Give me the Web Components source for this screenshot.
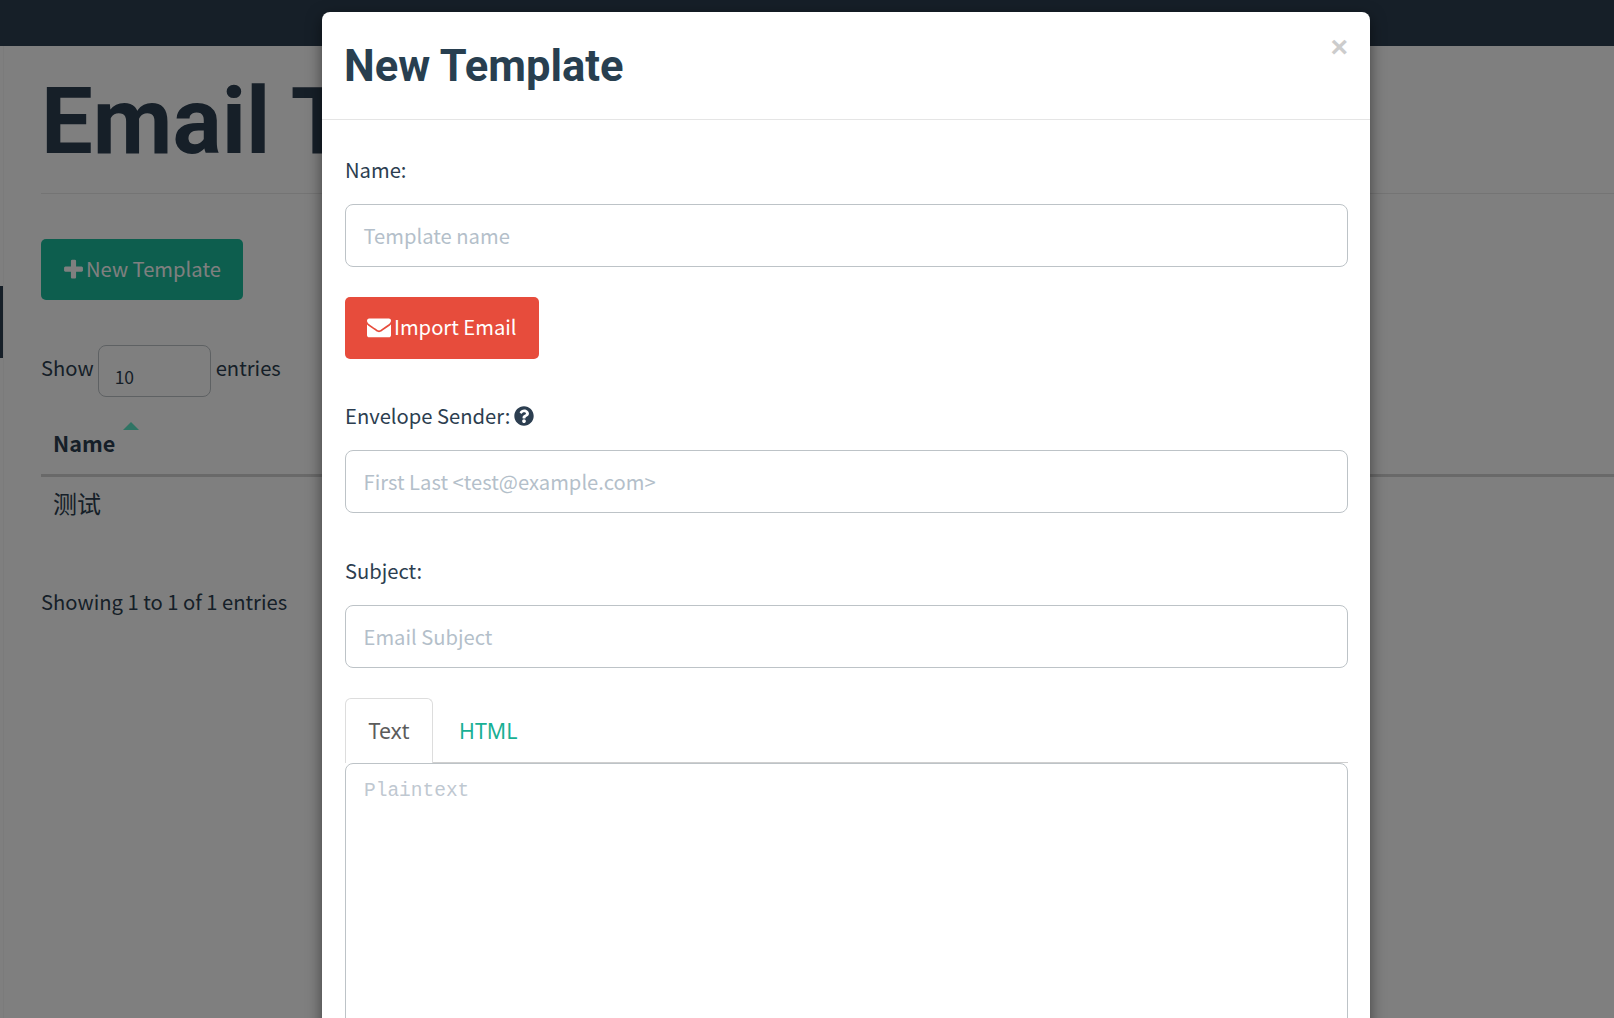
<!DOCTYPE html>
<html>
<head>
<meta charset="utf-8">
<title>Email Templates</title>
<style>
  html, body { margin: 0; height: 100%; overflow: hidden; }
  body {
    background: #fff;
    color: #2c3e50;
    font: 20.2px/1.5 "Noto Sans CJK SC", "Noto Sans", sans-serif;
  }
</style>
</head>
<body>
<app-page>
  <app-modal>
    <span slot="title">New Template</span>
    <form-field label="Name:" placeholder="Template name"></form-field>
    <action-button color="#e74c3c" icon="envelope" height="62" style="--icon-shift:-1px">Import Email</action-button>
    <form-field label="Envelope Sender:" placeholder="First Last &lt;test@example.com&gt;" help spaced></form-field>
    <form-field label="Subject:" placeholder="Email Subject" spaced></form-field>
    <tab-editor></tab-editor>
  </app-modal>
</app-page>

<script>
const ICONS = {
  plus: `<svg viewBox="0 0 1408 1792" width="19" height="24" fill="currentColor"><path d="M1408 736v192q0 40-28 68t-68 28h-416v416q0 40-28 68t-68 28h-192q-40 0-68-28t-28-68v-416h-416q-40 0-68-28t-28-68v-192q0-40 28-68t68-28h416v-416q0-40 28-68t68-28h192q40 0 68 28t28 68v416h416q40 0 68 28t28 68z"/></svg>`,
  envelope: `<svg viewBox="0 0 1792 1792" width="24" height="24" fill="currentColor"><path d="M1792 710v794q0 66-47 113t-113 47h-1472q-66 0-113-47t-47-113v-794q44 49 101 87 362 246 497 345 57 42 92.500 65.500t94.500 48 110 24.500h2q51 0 110-24.500t94.500-48 92.500-65.500q170-123 498-345 57-39 100-87zm0-294q0 79-49 151t-122 123q-376 261-468 325-10 7-42.500 30.500t-54 38-52 32.500-57.500 27-50 9h-2q-23 0-50-9t-57.500-27-52-32.500-54-38-42.500-30.500q-91-64-262-182.500t-205-142.500q-62-42-117-115.500t-55-136.500q0-78 41.500-130t118.500-52h1472q65 0 112.500 47t47.500 113z"/></svg>`,
  help: `<svg viewBox="0 0 512 512" width="20" height="20" fill="currentColor"><path d="M504 256c0 137-111 248-248 248S8 393 8 256 119 8 256 8s248 111 248 248zM263 90c-54 0-89 23-116 64-4 5-3 12 3 16l35 26c5 4 13 3 17-2 18-23 30-36 58-36 21 0 46 13 46 33 0 15-12 23-33 34-24 14-55 31-55 73v7c0 7 5 12 12 12h56c7 0 12-5 12-12v-1c0-29 85-31 85-109 0-59-61-105-120-105zm-7 252c-26 0-47 21-47 47s21 47 47 47 47-21 47-47-21-47-47-47z"/></svg>`
};

class AppPage extends HTMLElement {
  constructor() {
    super();
    this.attachShadow({ mode: "open" });
    this.shadowRoot.innerHTML = `
    <style>
      :host { display: block; height: 1018px; position: relative; overflow: hidden; }
      .nav { height: 46px; background: #2c3e50; }
      .main { display: flex; height: 972px; }
      .side { width: 3px; flex: none; border-right: 1px solid #f6f6f6; padding-top: 240px; }
      .side div { height: 72px; background: #2c3e50; }
      .content { flex: 1; padding-left: 37px; min-width: 0; }
      h1 { margin: 0; padding: 21px 0 0 0; height: 126px; border-bottom: 1px solid #e8e8e8; font: 700 92px/110px Roboto, sans-serif; white-space: nowrap; }
      .new { margin-top: 45px; }
      .length { display: flex; align-items: flex-start; gap: 4px; margin-top: 45px; height: 52px; line-height: 46px; }
      .select { width: 113px; height: 52px; margin-right: 1px; border: 1px solid #bdc3c7; border-radius: 8px; font-size: 17.5px; line-height: 20px; padding: 21px 0 0 16px; box-sizing: border-box; }
      .name { position: relative; height: 77px; border-bottom: 3px solid #d3d3d3; padding-left: 12px; font-weight: 700; font-size: 21.6px; line-height: 92px; }
      .sort { position: absolute; left: 82px; top: 25px; width: 0; height: 0; border: 8px solid transparent; border-top: 0; border-bottom: 8px solid #5ee8c8; }
      .cell { padding-left: 12px; height: 60px; font-size: 24px; line-height: 52px; }
      .info { margin-top: 50px; }
      .overlay { position: absolute; inset: 0; background: rgba(0,0,0,.5); }
    </style>
    <div class="nav"></div>
    <div class="main">
      <div class="side"><div></div></div>
      <div class="content">
        <h1>Email Templates</h1>
        <div class="new"><action-button color="#1abc9c" icon="plus" height="61" style="padding-left:23px;--label-shift:0px">New Template</action-button></div>
        <div class="length"><span>Show</span><div class="select">10</div><span>entries</span></div>
        <div class="name">Name<span class="sort"></span></div>
        <div class="cell">测试</div>
        <div class="info">Showing 1 to 1 of 1 entries</div>
      </div>
    </div>
    <div class="overlay"></div>
    <slot></slot>`;
  }
}

class AppModal extends HTMLElement {
  constructor() {
    super();
    this.attachShadow({ mode: "open" });
    this.shadowRoot.innerHTML = `
    <style>
      :host { display: block; position: absolute; left: 322px; top: 12px; width: 1048px; height: 1100px; background: #fff; border-radius: 8px; box-shadow: 0 5px 15px rgba(0,0,0,.5); }
      header { position: relative; height: 107px; border-bottom: 1px solid #e5e5e5; padding-left: 22px; }
      h4 { margin: 0; padding-top: 25px; font: 700 43.5px/60px Roboto, sans-serif; color: #283f50; }
      .close { position: absolute; right: 22px; top: 17px; font: 700 30px/36px "Liberation Sans", sans-serif; color: #cccccc; }
      .body { padding: 33px 22px 0 23px; }
    </style>
    <header><h4><slot name="title"></slot></h4><span class="close">×</span></header>
    <div class="body"><slot></slot></div>`;
  }
}

class ActionButton extends HTMLElement {
  constructor() {
    super();
    this.attachShadow({ mode: "open" });
    this.shadowRoot.innerHTML = `
    <style>
      :host { display: flex; width: fit-content; align-items: center; gap: 3px; padding: 0 22px; border-radius: 5px; color: #fff; box-sizing: border-box; margin-bottom: 29px; }
      span { display: flex; position: relative; top: var(--icon-shift, 0); }
      .label { position: relative; top: var(--label-shift, -1px); }
    </style>
    <span>${ICONS[this.getAttribute("icon")]}</span><div class="label"><slot></slot></div>`;
    this.style.background = this.getAttribute("color");
    this.style.height = this.getAttribute("height") + "px";
  }
}

class FormField extends HTMLElement {
  constructor() {
    super();
    this.attachShadow({ mode: "open" });
    const help = this.hasAttribute("help") ? ICONS.help : "";
    this.shadowRoot.innerHTML = `
    <style>
      :host { display: block; margin-bottom: 30px; }
      :host([spaced]) { padding-top: 11px; }
      label { display: flex; align-items: center; gap: 4px; height: 34px; margin-bottom: 17px; }
      .input { height: 63px; border: 1px solid #bdc3c7; border-radius: 8px; padding: 0 17.5px; line-height: 61px; color: #b4bfca; box-sizing: border-box; }
    </style>
    <label>${this.getAttribute("label")} ${help}</label>
    <div class="input"></div>`;
    this.shadowRoot.querySelector(".input").textContent = this.getAttribute("placeholder");
  }
}

class TabEditor extends HTMLElement {
  constructor() {
    super();
    this.attachShadow({ mode: "open" });
    this.shadowRoot.innerHTML = `
    <style>
      :host { display: block; }
      .tabs { display: flex; height: 65px; border-bottom: 1px solid #cfcfcf; box-sizing: border-box; }
      .tab { height: 65px; line-height: 64px; font-family: "Noto Sans", sans-serif; font-size: 21.4px; box-sizing: border-box; }
      .tab.active { padding: 0 22.5px; border: 1px solid #dddddd; border-bottom: 0; border-radius: 6px 6px 0 0; background: #fff; color: #5c5c5c; }
      .tab.link { color: #18b094; padding: 0 26px; line-height: 66px; }
      .area { height: 300px; border: 1px solid #bdc3c7; border-radius: 8px; padding: 15px 18px; font: 19.5px/24px "Liberation Mono", monospace; color: #bfc8d1; }
    </style>
    <div class="tabs"><div class="tab active">Text</div><div class="tab link">HTML</div></div>
    <div class="area">Plaintext</div>`;
  }
}

customElements.define("action-button", ActionButton);
customElements.define("form-field", FormField);
customElements.define("tab-editor", TabEditor);
customElements.define("app-modal", AppModal);
customElements.define("app-page", AppPage);
</script>
</body>
</html>
